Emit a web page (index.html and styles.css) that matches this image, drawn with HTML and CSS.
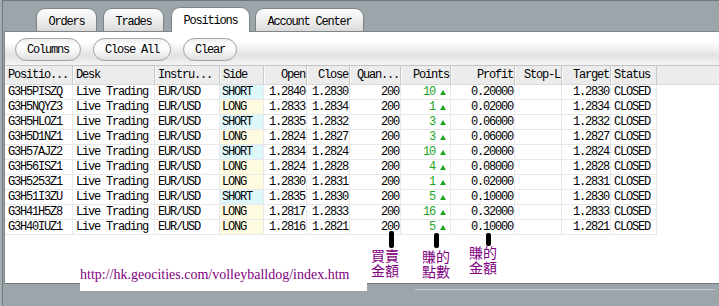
FILE: index.html
```html
<!DOCTYPE html>
<html>
<head>
<meta charset="utf-8">
<title>Positions</title>
<link rel="stylesheet" href="styles.css">
</head>
<body>
<div class="window">
  <div class="tabs">
    <div class="tab t-orders">Orders</div>
    <div class="tab t-trades">Trades</div>
    <div class="tab active t-pos">Positions</div>
    <div class="tab t-acct">Account Center</div>
  </div>
  <div class="panel">
    <div class="toolbar">
      <button class="btn b1">Columns</button>
      <button class="btn b2">Close All</button>
      <button class="btn b3">Clear</button>
    </div>
    <div class="head">
      <div class="c l">Positio...</div>
      <div class="c l">Desk</div>
      <div class="c l">Instru...</div>
      <div class="c l">Side</div>
      <div class="c r">Open</div>
      <div class="c r">Close</div>
      <div class="c r">Quan...</div>
      <div class="c r">Points</div>
      <div class="c r">Profit</div>
      <div class="c r">Stop-L</div>
      <div class="c r">Target</div>
      <div class="c l">Status</div>
      <div class="fill"></div>
    </div>
    <div class="rows">
      <div class="row"><div class="c l">G3H5PISZQ</div><div class="c l">Live Trading</div><div class="c l">EUR/USD</div><div class="c l short">SHORT</div><div class="c r">1.2840</div><div class="c r">1.2830</div><div class="c r">200</div><div class="c pts">10<i class="up"></i></div><div class="c r">0.20000</div><div class="c r"></div><div class="c r">1.2830</div><div class="c l">CLOSED</div></div>
      <div class="row"><div class="c l">G3H5NQYZ3</div><div class="c l">Live Trading</div><div class="c l">EUR/USD</div><div class="c l long">LONG</div><div class="c r">1.2833</div><div class="c r">1.2834</div><div class="c r">200</div><div class="c pts">1<i class="up"></i></div><div class="c r">0.02000</div><div class="c r"></div><div class="c r">1.2834</div><div class="c l">CLOSED</div></div>
      <div class="row"><div class="c l">G3H5HLOZ1</div><div class="c l">Live Trading</div><div class="c l">EUR/USD</div><div class="c l short">SHORT</div><div class="c r">1.2835</div><div class="c r">1.2832</div><div class="c r">200</div><div class="c pts">3<i class="up"></i></div><div class="c r">0.06000</div><div class="c r"></div><div class="c r">1.2832</div><div class="c l">CLOSED</div></div>
      <div class="row"><div class="c l">G3H5D1NZ1</div><div class="c l">Live Trading</div><div class="c l">EUR/USD</div><div class="c l long">LONG</div><div class="c r">1.2824</div><div class="c r">1.2827</div><div class="c r">200</div><div class="c pts">3<i class="up"></i></div><div class="c r">0.06000</div><div class="c r"></div><div class="c r">1.2827</div><div class="c l">CLOSED</div></div>
      <div class="row"><div class="c l">G3H57AJZ2</div><div class="c l">Live Trading</div><div class="c l">EUR/USD</div><div class="c l short">SHORT</div><div class="c r">1.2834</div><div class="c r">1.2824</div><div class="c r">200</div><div class="c pts">10<i class="up"></i></div><div class="c r">0.20000</div><div class="c r"></div><div class="c r">1.2824</div><div class="c l">CLOSED</div></div>
      <div class="row"><div class="c l">G3H56ISZ1</div><div class="c l">Live Trading</div><div class="c l">EUR/USD</div><div class="c l long">LONG</div><div class="c r">1.2824</div><div class="c r">1.2828</div><div class="c r">200</div><div class="c pts">4<i class="up"></i></div><div class="c r">0.08000</div><div class="c r"></div><div class="c r">1.2828</div><div class="c l">CLOSED</div></div>
      <div class="row"><div class="c l">G3H5253Z1</div><div class="c l">Live Trading</div><div class="c l">EUR/USD</div><div class="c l long">LONG</div><div class="c r">1.2830</div><div class="c r">1.2831</div><div class="c r">200</div><div class="c pts">1<i class="up"></i></div><div class="c r">0.02000</div><div class="c r"></div><div class="c r">1.2831</div><div class="c l">CLOSED</div></div>
      <div class="row"><div class="c l">G3H51I3ZU</div><div class="c l">Live Trading</div><div class="c l">EUR/USD</div><div class="c l short">SHORT</div><div class="c r">1.2835</div><div class="c r">1.2830</div><div class="c r">200</div><div class="c pts">5<i class="up"></i></div><div class="c r">0.10000</div><div class="c r"></div><div class="c r">1.2830</div><div class="c l">CLOSED</div></div>
      <div class="row"><div class="c l">G3H41H5Z8</div><div class="c l">Live Trading</div><div class="c l">EUR/USD</div><div class="c l long">LONG</div><div class="c r">1.2817</div><div class="c r">1.2833</div><div class="c r">200</div><div class="c pts">16<i class="up"></i></div><div class="c r">0.32000</div><div class="c r"></div><div class="c r">1.2833</div><div class="c l">CLOSED</div></div>
      <div class="row"><div class="c l">G3H40IUZ1</div><div class="c l">Live Trading</div><div class="c l">EUR/USD</div><div class="c l long">LONG</div><div class="c r">1.2816</div><div class="c r">1.2821</div><div class="c r">200</div><div class="c pts">5<i class="up"></i></div><div class="c r">0.10000</div><div class="c r"></div><div class="c r">1.2821</div><div class="c l">CLOSED</div></div>
    </div>
  </div>
  <div class="footer"><div class="footline"></div></div>
</div>
<div class="url">http://hk.geocities.com/volleyballdog/index.htm</div>
<div class="mark m1"></div>
<div class="mark m2"></div>
<div class="mark m3"></div>
<div class="note n1">買賣<br>金額</div>
<div class="note n2">賺的<br>點數</div>
<div class="note n3">賺的<br>金額</div>
</body>
</html>
```
FILE: styles.css
```css
* { box-sizing: border-box; margin: 0; padding: 0; }
html, body { width: 719px; height: 306px; overflow: hidden; }
body {
  position: relative;
  background: #a3acb0;
  font-family: "Liberation Mono", "DejaVu Sans Mono", monospace;
  font-size: 12px;
  letter-spacing: -1.2px;
  color: #000;
}
.window {
  margin-left: 2px;
  height: 306px;
  border-left: 1px solid #717a7e;
  border-top: 1px solid #6e777b;
  background: #9ba5aa;
  display: flex;
  flex-direction: column;
}
.tabs {
  height: 30px;
  display: flex;
  align-items: flex-end;
  padding-left: 33px;
}
.tab {
  height: 23px;
  padding-top: 3px;
  border: 1px solid #7b8488;
  border-bottom: 0;
  border-radius: 9px 9px 0 0;
  background: linear-gradient(#fdfdfd, #eeeeee 55%, #d9d9d9);
  display: flex;
  align-items: center;
  justify-content: center;
  white-space: nowrap;
}
.t-orders { width: 61px; margin-right: 6px; }
.t-trades { width: 61px; margin-right: 7px; }
.t-pos { width: 79px; margin-right: 5px; }
.t-acct { width: 109px; }
.tab.active {
  height: 25px;
  padding-top: 2px;
  background: #fff;
  margin-bottom: -1px;
  position: relative;
  z-index: 1;
}
.panel {
  margin-left: 1px;
  height: 253px;
  border-left: 1px solid #7c8589;
  border-top: 1px solid #7c8589;
  border-bottom: 1px solid #6f787c;
  background: #fff;
  display: flex;
  flex-direction: column;
}
.toolbar {
  height: 33px;
  flex: none;
  padding: 6px 0 0 10px;
  display: flex;
  align-items: flex-start;
  background: linear-gradient(#fff 0, #fff 30%, #e2e2e2 70%, #f4f4f4 100%);
}
.btn {
  height: 23px;
  border: 1px solid #a2a2a2;
  border-radius: 12px;
  background: linear-gradient(#efefef, #ffffff 35%, #f6f6f6 60%, #dedede);
  font: inherit;
  letter-spacing: inherit;
  color: #000;
  margin-right: 12px;
  display: flex;
  align-items: center;
  justify-content: center;
}
.b1 { width: 66px; }
.b2 { width: 78px; }
.b3 { width: 54px; }

.head, .row {
  display: grid;
  grid-template-columns: 68px 82px 65px 44px 43px 43px 51px 50px 64px 47px 49px 46px;
}
.head {
  grid-template-columns: 68px 82px 65px 44px 43px 43px 51px 50px 64px 47px 49px 46px 1fr;
  height: 20px;
  flex: none;
  border-top: 1px solid #c4c4c4;
  border-bottom: 1px solid #dadada;
  background: #ececec;
  line-height: 18px;
}
.head .c {
  border-right: 1px solid #c8c8c8;
  box-shadow: inset 1px 0 0 #fafafa;
  white-space: nowrap;
  overflow: hidden;
}
.head .l { padding-left: 5px; }
.head .r { padding-right: 3px; }
.row {
  width: 652px;
  height: 15px;
  border-bottom: 1px solid #e9e9e9;
  line-height: 14px;
}
.row .c {
  border-right: 1px solid #e9e9e9;
  white-space: nowrap;
  overflow: hidden;
}
.c.l { text-align: left; padding-left: 3px; }
.c.r { text-align: right; padding-right: 1px; }
.row .short { background: #def7fb; padding-left: 2px; }
.row .long { background: #fffbe1; padding-left: 2px; }
.pts {
  text-align: right;
  padding-right: 4px;
  color: #1ea51e;
}
.up {
  display: inline-block;
  width: 0;
  height: 0;
  border-left: 3px solid transparent;
  border-right: 3px solid transparent;
  border-bottom: 5px solid #1ea51e;
  margin-left: 5px;
  vertical-align: 0;
}
.footer {
  flex: 1;
  padding-top: 5px;
}
.footline {
  margin-left: 412px;
  width: 300px;
  height: 1px;
  background: #c5cbce;
}
.url {
  position: absolute;
  left: 80px;
  top: 262px;
  width: 287px;
  height: 29px;
  padding-top: 5px;
  background: #fff;
  font-family: "Liberation Serif", serif;
  font-size: 14px;
  line-height: 16px;
  letter-spacing: 0;
  color: #800080;
  white-space: nowrap;
}
.mark {
  position: absolute;
  width: 5px;
  background: #000;
  border-radius: 2px;
}
.m1 { left: 389px; top: 231px; height: 17px; }
.m2 { left: 434px; top: 233px; height: 15px; }
.m3 { left: 486px; top: 233px; height: 13px; }
.note {
  position: absolute;
  font-family: "Noto Sans CJK TC", "Noto Sans CJK SC", sans-serif;
  font-size: 14px;
  line-height: 15px;
  letter-spacing: 0;
  color: #800080;
  white-space: nowrap;
}
.n1 { left: 371px; top: 248px; }
.n2 { left: 422px; top: 249px; }
.n3 { left: 469px; top: 245px; }
```
